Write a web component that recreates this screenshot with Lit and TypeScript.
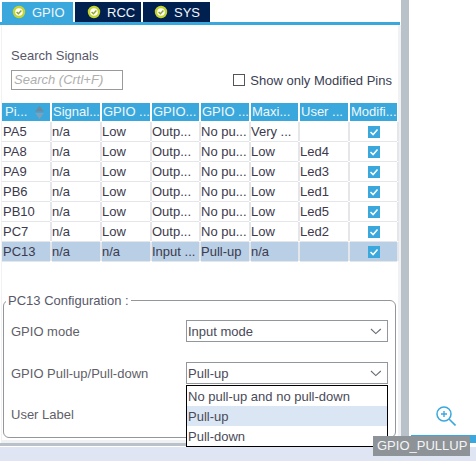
import { LitElement, html, css, svg } from "lit";
import { customElement } from "lit/decorators.js";

const rows = [
  ["PA5", "n/a", "Low", "Outp...", "No pu...", "Very ...", ""],
  ["PA8", "n/a", "Low", "Outp...", "No pu...", "Low", "Led4"],
  ["PA9", "n/a", "Low", "Outp...", "No pu...", "Low", "Led3"],
  ["PB6", "n/a", "Low", "Outp...", "No pu...", "Low", "Led1"],
  ["PB10", "n/a", "Low", "Outp...", "No pu...", "Low", "Led5"],
  ["PC7", "n/a", "Low", "Outp...", "No pu...", "Low", "Led2"],
  ["PC13", "n/a", "n/a", "Input ...", "Pull-up", "n/a", ""],
];
const heads = ["Pi...", "Signal...", "GPIO ...", "GPIO...", "GPIO ...", "Maxi...", "User ...", "Modifi..."];

const tabIcon = svg`<svg class="tab-ic" width="14" height="14" viewBox="0 0 14 14"><circle cx="7" cy="7" r="5" fill="#fff" stroke="#c5d52f" stroke-width="2.4"/><path d="M4.6 7l1.8 1.8 3-3.2" fill="none" stroke="#8fa32a" stroke-width="1.4"/></svg>`;
const chevron = svg`<svg class="chev" width="12" height="7" viewBox="0 0 12 7"><path d="M1 1l4.8 4.6L10.8 1" fill="none" stroke="#666c72" stroke-width="1.1"/></svg>`;

@customElement("app-root")
export class AppRoot extends LitElement {
  static styles = css`
    :host { display: block; position: relative; width: 476px; height: 461px; overflow: hidden; background: #fff;
      font-family: "Liberation Sans", Arial, sans-serif; font-size: 13px; color: #3c3a4c; }
    .main { display: grid; grid-template-columns: 401px 8px 67px; height: 443px; }
    .panel { display: flex; flex-direction: column; min-width: 0; }
    .tabs { display: flex; gap: 2px; height: 20px; margin-top: 2px; padding-left: 2px; }
    .tab { display: flex; align-items: center; gap: 6px; background: #002050; color: #f2f6fa; box-sizing: border-box; }
    .tab.on { background: #3aa8dc; width: 71px; padding-left: 10px; }
    .tab.r { width: 66px; padding-left: 12px; }
    .tab.s { width: 67px; padding-left: 11px; }
    .rule { height: 3px; background: #3aa8dc; width: 400px; }
    .body { flex: 1; margin-left: 1px; background: #fff; border-right: 3px solid #eff1f3; border-left: 1px solid #f2f2f2; border-bottom: 3px solid #f0f1f3; display: flex; flex-direction: column; }
    .title { margin: 23px 0 0 9px; color: #58586a; line-height: 15px; }
    .search-row { display: flex; justify-content: space-between; align-items: center; margin: 7px 0 0 9px; padding-right: 4px; }
    .search { box-sizing: border-box; width: 112px; height: 20px; border: 1px solid #9a9a9a; font-style: italic; color: #aeaeae; padding-left: 2px; line-height: 18px; }
    .mod { display: flex; align-items: center; gap: 5px; color: #3a4052; margin-right: 2px; }
    .box { width: 12px; height: 12px; border: 1px solid #555; box-sizing: border-box; background: #fff; }
    .table { display: grid; grid-template-columns: 48px 48px 48px 47px 48px 47px 48px 47px; column-gap: 2px; margin: 13px 0 0 0; background: #fff; }
    .hd { height: 18px; line-height: 18px; background: #3aa8dc; color: #eef7fb; padding-left: 1px; white-space: nowrap; overflow: hidden; position: relative; margin-bottom: 1px; }
    .hd.first { padding-left: 3px; }
    .sort { position: absolute; left: 32px; top: 3px; }
    .row { display: contents; }
    .c { height: 19px; line-height: 20px; box-shadow: 0 1px 0 #e4e6ea, 2px 0 0 #e4e6ea; margin-bottom: 1px; white-space: nowrap; position: relative; }
    .c.first { padding-left: 1px; }
    .row.sel .c { background: #b8cfe6; }
    .c.chk { display: flex; align-items: center; justify-content: center; }
    fieldset { margin: 31px 0 0 1px; box-sizing: border-box; width: 393px; height: 145px; border: 1px solid #92979b; border-radius: 6px; padding: 0; position: relative; }
    legend { margin-left: 2px; padding: 0 2px; color: #58586a; font-size: 13px; line-height: 15px; }
    .line { display: grid; grid-template-columns: 175px 202px; align-items: center; padding-left: 7px; height: 22px; color: #5f5f68; }
    .line span { padding-top: 1px; }
    .line + .line { margin-top: 20px; }
    .line.first { margin-top: 12px; }
    .sel-box { box-sizing: border-box; height: 22px; border: 1px solid #92979b; color: #4a4a58; display: flex; align-items: center; justify-content: space-between; padding: 0 5px 0 1px; background: #fff; }
    .lbl3 { padding-left: 7px; margin-top: 23px; color: #5f5f68; line-height: 15px; }
    .menu { position: absolute; left: 186px; top: 385px; width: 202px; height: 62px; box-sizing: border-box; border: 1px solid #000; background: #fff; color: #4a4a58; z-index: 2; }
    .menu div { height: 20px; line-height: 21px; padding-left: 1px; }
    .menu .hi { background: #dae6f3; }
    .vbar { background: #b8c2c8; }
    .right { display: flex; flex-direction: column; align-items: flex-start; justify-content: flex-end; padding-left: 2px; }
    .zoom { margin: 0 0 9px 25px; display: block; }
    .blue { height: 8px; width: 65px; background: #3aa8dc; }
    .hbar { height: 3px; width: 409px; background: #b8c2c8; }
    .foot { height: 14px; margin-top: 1px; background: #dfe5f3; }
    .tip { position: absolute; left: 373px; top: 436px; width: 97px; height: 20px; line-height: 20px; background: #8e9398; color: #f4f5f6; font-size: 13px; padding-left: 4px; box-sizing: border-box; z-index: 3; white-space: nowrap; }
  `;

  render() {
    return html`
      <div class="main">
        <div class="panel">
          <div class="tabs">
            <div class="tab on">${tabIcon}<span>GPIO</span></div>
            <div class="tab r">${tabIcon}<span>RCC</span></div>
            <div class="tab s">${tabIcon}<span>SYS</span></div>
          </div>
          <div class="rule"></div>
          <div class="body">
            <div class="title">Search Signals</div>
            <div class="search-row">
              <div class="search">Search (Crtl+F)</div>
              <div class="mod"><span class="box"></span><span>Show only Modified Pins</span></div>
            </div>
            <div class="table">
              ${heads.map(
                (h, i) => html`<div class="hd ${i === 0 ? "first" : ""}">${h}${i === 0
                  ? svg`<svg class="sort" width="11" height="14" viewBox="0 0 11 14"><path d="M5.5 0L10 5.5H1z" fill="#6d8a9c"/><path d="M5.5 13L10 7H1z" fill="#7fa0b8"/></svg>`
                  : ""}</div>`
              )}
              ${rows.map(
                (r, ri) => html`<div class="row ${ri === 6 ? "sel" : ""}">
                  ${r.map((t, i) => html`<div class="c ${i === 0 ? "first" : ""}">${t}</div>`)}
                  <div class="c chk">
                    <svg width="12" height="12" viewBox="0 0 12 12"><rect width="12" height="12" fill="#3aa8dc"/><path d="M2.5 6l2.6 2.6 4.4-5" fill="none" stroke="#fff" stroke-width="1.5"/></svg>
                  </div>
                </div>`
              )}
            </div>
            <fieldset>
              <legend>PC13 Configuration :</legend>
              <div class="line first"><span>GPIO mode</span><div class="sel-box"><span>Input mode</span>${chevron}</div></div>
              <div class="line"><span>GPIO Pull-up/Pull-down</span><div class="sel-box"><span>Pull-up</span>${chevron}</div></div>
              <div class="lbl3">User Label</div>
            </fieldset>
          </div>
        </div>
        <div class="vbar"></div>
        <div class="right">
          <svg class="zoom" width="20" height="20" viewBox="0 0 20 20" fill="none" stroke="#3aa8dc"><circle cx="8" cy="8" r="7" stroke-width="1.5"/><path d="M5 8h6M8 5v6" stroke-width="1.4"/><path d="M13 13l6.5 6.5" stroke-width="1.6"/></svg>
          <div class="blue"></div>
        </div>
      </div>
      <div class="hbar"></div>
      <div class="foot"></div>
      <div class="menu"><div>No pull-up and no pull-down</div><div class="hi">Pull-up</div><div>Pull-down</div></div>
      <div class="tip">GPIO_PULLUP</div>
    `;
  }
}
